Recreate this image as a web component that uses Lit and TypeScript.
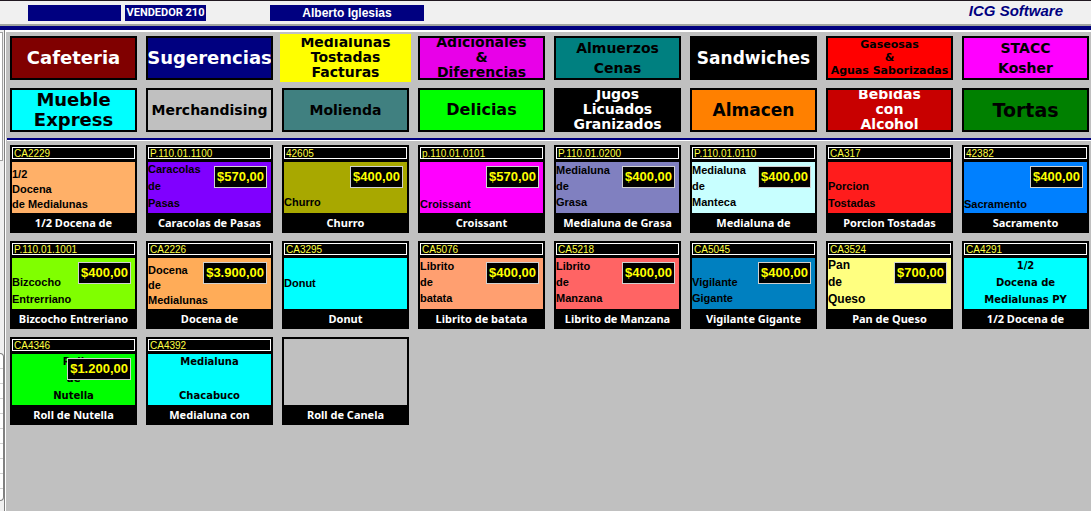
import { LitElement, html, css, nothing } from "lit";
import { customElement, property } from "lit/decorators.js";
import { classMap } from "lit/directives/class-map.js";
import { styleMap } from "lit/directives/style-map.js";

interface Category {
  lines: string[];
  bg: string;
  fg?: string;
  size: number;
  lh: number;
  selected?: boolean;
}

interface Product {
  code?: string;
  lines: string[];
  bg: string;
  name: string;
  price?: string;
  size?: number;
  lh?: number;
  align?: "raised" | "mid";
  wide?: boolean;
}

const CATEGORIES: Category[] = [
  { lines: ["Cafeteria"], bg: "#800000", fg: "#fff", size: 18, lh: 22 },
  { lines: ["Sugerencias"], bg: "#000080", fg: "#fff", size: 18, lh: 22 },
  { lines: ["Medialunas", "Tostadas", "Facturas"], bg: "#ffff00", size: 14, lh: 15, selected: true },
  { lines: ["Adicionales", "&", "Diferencias"], bg: "#e800e8", size: 14, lh: 15 },
  { lines: ["Almuerzos", "Cenas"], bg: "#008080", size: 14, lh: 20 },
  { lines: ["Sandwiches"], bg: "#000", fg: "#fff", size: 17, lh: 20 },
  { lines: ["Gaseosas", "&", "Aguas Saborizadas"], bg: "#ff0000", size: 11, lh: 13 },
  { lines: ["STACC", "Kosher"], bg: "#ff00ff", size: 14, lh: 20 },
  { lines: ["Mueble", "Express"], bg: "#00ffff", size: 18, lh: 20 },
  { lines: ["Merchandising"], bg: "#c0c0c0", size: 14, lh: 20 },
  { lines: ["Molienda"], bg: "#408080", size: 14, lh: 20 },
  { lines: ["Delicias"], bg: "#00ff00", size: 16, lh: 20 },
  { lines: ["Jugos", "Licuados", "Granizados"], bg: "#000", fg: "#fff", size: 14, lh: 15 },
  { lines: ["Almacen"], bg: "#ff8000", size: 17, lh: 20 },
  { lines: ["Bebidas", "con", "Alcohol"], bg: "#c80000", fg: "#fff", size: 14, lh: 15 },
  { lines: ["Tortas"], bg: "#008000", size: 19, lh: 20 },
];

const PRODUCTS: Product[] = [
  { code: "CA2229", lines: ["1/2", "Docena", "de Medialunas"], bg: "#ffb068", name: "1/2 Docena de", lh: 15 },
  { code: "P.110.01.1100", lines: ["Caracolas", "de", "Pasas"], bg: "#8000ff", name: "Caracolas de Pasas", price: "$570,00", lh: 17 },
  { code: "42605", lines: ["Churro"], bg: "#a8a800", name: "Churro", price: "$400,00", align: "raised" },
  { code: "p.110.01.0101", lines: ["Croissant"], bg: "#ff00ff", name: "Croissant", price: "$570,00" },
  { code: "P.110.01.0200", lines: ["Medialuna", "de", "Grasa"], bg: "#8080c0", name: "Medialuna de Grasa", price: "$400,00", align: "raised" },
  { code: "P.110.01.0110", lines: ["Medialuna", "de", "Manteca"], bg: "#c8ffff", name: "Medialuna de", price: "$400,00", align: "raised" },
  { code: "CA317", lines: ["Porcion", "Tostadas"], bg: "#ff1c1c", name: "Porcion Tostadas", lh: 17 },
  { code: "42382", lines: ["Sacramento"], bg: "#0080ff", name: "Sacramento", price: "$400,00" },
  { code: "P.110.01.1001", lines: ["Bizcocho", "Entrerriano"], bg: "#80ff00", name: "Bizcocho Entreriano", price: "$400,00", lh: 17 },
  { code: "CA2226", lines: ["Docena", "de", "Medialunas"], bg: "#ffac58", name: "Docena de", price: "$3.900,00", lh: 15 },
  { code: "CA3295", lines: ["Donut"], bg: "#00ffff", name: "Donut", align: "mid" },
  { code: "CA5076", lines: ["Librito", "de", "batata"], bg: "#ff9f70", name: "Librito de batata", price: "$400,00", align: "raised" },
  { code: "CA5218", lines: ["Librito", "de", "Manzana"], bg: "#ff6464", name: "Librito de Manzana", price: "$400,00", align: "raised" },
  { code: "CA5045", lines: ["Vigilante", "Gigante"], bg: "#0080c0", name: "Vigilante Gigante", price: "$400,00", align: "raised" },
  { code: "CA3524", lines: ["Pan", "de", "Queso"], bg: "#ffff80", name: "Pan de Queso", price: "$700,00", size: 12, lh: 17 },
  { code: "CA4291", lines: ["1/2", "Docena de", "Medialunas PY"], bg: "#00ffff", name: "1/2 Docena de", wide: true, lh: 17 },
  { code: "CA4346", lines: ["Roll", "de", "Nutella"], bg: "#00ff00", name: "Roll de Nutella", price: "$1.200,00", wide: true, lh: 17 },
  { code: "CA4392", lines: ["Medialuna", "\u00a0", "Chacabuco"], bg: "#00ffff", name: "Medialuna con", wide: true, lh: 17 },
  { lines: [], bg: "#c0c0c0", name: "Roll de Canela" },
];

@customElement("category-button")
export class CategoryButton extends LitElement {
  @property({ attribute: false }) item!: Category;

  static styles = css`
    :host {
      display: block;
      height: 44px;
    }
    .cat {
      box-sizing: border-box;
      width: 100%;
      height: 100%;
      padding: 0;
      border: 2px solid #000;
      display: flex;
      flex-direction: column;
      align-items: center;
      justify-content: center;
      overflow: hidden;
      font-family: "DejaVu Sans", sans-serif;
      font-weight: bold;
      white-space: nowrap;
    }
    .triple {
      padding-bottom: 2px;
    }
    .line {
      flex: none;
    }
    .selected {
      border-color: #ffff00;
      outline: 2px solid #ffff00;
    }
  `;

  render() {
    const c = this.item;
    return html`<button
      class=${classMap({ cat: true, triple: c.lines.length > 2, selected: !!c.selected })}
      style=${styleMap({
        background: c.bg,
        color: c.fg ?? "#000",
        fontSize: `${c.size}px`,
        lineHeight: `${c.lh}px`,
      })}
    >
      ${c.lines.map((l) => html`<span class="line">${l}</span>`)}
    </button>`;
  }
}

@customElement("product-button")
export class ProductButton extends LitElement {
  @property({ attribute: false }) item!: Product;

  static styles = css`
    :host {
      display: block;
      height: 88px;
    }
    .tile {
      position: relative;
      box-sizing: border-box;
      width: 100%;
      height: 100%;
      padding: 0;
      border: 2px solid #000;
      background: #000;
      display: flex;
      flex-direction: column;
      align-items: stretch;
      text-align: left;
    }
    .code {
      flex: none;
      box-sizing: border-box;
      height: 12px;
      margin-bottom: 3px;
      padding-left: 1px;
      border: 1px solid #fff;
      color: #ffff40;
      font: 10px/11px "Liberation Sans", Arial, sans-serif;
      overflow: hidden;
    }
    .art {
      flex: 1;
      min-height: 0;
      display: flex;
      flex-direction: column;
      justify-content: flex-end;
      overflow: hidden;
      padding-bottom: 1px;
      color: #000;
      font: bold 11px/16px "Liberation Sans", Arial, sans-serif;
      white-space: nowrap;
    }
    .raised {
      padding-bottom: 3px;
    }
    .mid {
      justify-content: center;
    }
    .wide {
      align-items: center;
      font-family: "DejaVu Sans", sans-serif;
      font-size: 10px;
    }
    .line {
      flex: none;
    }
    .name {
      flex: none;
      height: 18px;
      overflow: hidden;
      text-align: center;
      color: #fff;
      font: bold 11px/20px "Noto Sans", "Open Sans", sans-serif;
      white-space: nowrap;
    }
    .price {
      position: absolute;
      top: 19px;
      right: 4px;
      padding: 0 2px;
      border: 1px solid #d0d0d0;
      background: #000;
      color: #ffff00;
      font: bold 13px/20px "Liberation Sans", Arial, sans-serif;
    }
  `;

  render() {
    const p = this.item;
    const art: Record<string, string> = {
      background: p.bg,
      lineHeight: `${p.lh ?? 16}px`,
    };
    if (p.size) art.fontSize = `${p.size}px`;
    return html`<button class="tile">
      ${p.code ? html`<span class="code">${p.code}</span>` : nothing}
      <span
        class=${classMap({
          art: true,
          raised: p.align === "raised",
          mid: p.align === "mid",
          wide: !!p.wide,
        })}
        style=${styleMap(art)}
      >
        ${p.lines.map((l) => html`<span class="line">${l}</span>`)}
      </span>
      <span class="name">${p.name}</span>
      ${p.price ? html`<span class="price">${p.price}</span>` : nothing}
    </button>`;
  }
}

@customElement("app-root")
export class AppRoot extends LitElement {
  static styles = css`
    :host {
      display: flex;
      flex-direction: column;
      min-height: 100vh;
      background: #c0c0c0;
    }
    .top {
      box-sizing: border-box;
      height: 30px;
      display: flex;
      align-items: flex-start;
      padding: 4px 28px 0 28px;
      border-top: 1px solid #201820;
      border-bottom: 4px solid #000080;
      background: linear-gradient(#f0f0f0 23px, #a0a4a0 23px);
      background-clip: padding-box;
      color: #fff;
      font: bold 12px/16px "Liberation Sans", Arial, sans-serif;
      text-align: center;
      white-space: nowrap;
    }
    .field {
      height: 16px;
      background: #000080;
    }
    .blank {
      width: 93px;
      margin-right: 4px;
    }
    .seller {
      width: 81px;
      margin-right: 64px;
      font-family: Roboto, sans-serif;
      font-size: 11px;
    }
    .user {
      width: 154px;
    }
    .brand {
      margin-left: auto;
      color: #000080;
      font-size: 15px;
      line-height: 12px;
      font-style: italic;
    }
    .body {
      flex: 1;
      display: flex;
    }
    .side {
      flex: none;
      width: 4px;
      display: flex;
      flex-direction: column;
      align-items: flex-start;
      background: #f0f0f0;
      border-right: 1px solid #808080;
      box-shadow: 1px 0 #fff;
    }
    .panel {
      box-sizing: border-box;
      width: 3px;
      height: 129px;
      margin-top: 2px;
      border: 1px solid #a0a0a0;
      border-left: 0;
      background: #fff;
    }
    .list {
      box-sizing: border-box;
      width: 4px;
      margin-top: 192px;
      height: 148px;
      border: 1px solid #808080;
      border-left: 0;
      border-radius: 0 4px 4px 0;
      background: repeating-linear-gradient(#fff 0 14px, #d0d0d0 14px 15px);
    }
    .main {
      flex: 1;
      min-width: 0;
      margin-left: 1px;
      border-top: 2px solid #fff;
    }
    .grid {
      display: grid;
      grid-template-columns: repeat(8, minmax(0, 1fr));
      gap: 8px 9px;
      padding: 0 2px 0 4px;
    }
    .cats {
      padding-top: 4px;
      padding-bottom: 6px;
    }
    .rule {
      height: 2px;
      margin-left: 1px;
      border-bottom: 1px solid #fff;
      background: #000080;
    }
    .prods {
      padding-top: 4px;
    }
  `;

  render() {
    return html`
      <header class="top">
        <span class="field blank"></span>
        <span class="field seller">VENDEDOR 210</span>
        <span class="field user">Alberto Iglesias</span>
        <span class="brand">ICG Software</span>
      </header>
      <div class="body">
        <aside class="side">
          <div class="panel"></div>
          <div class="list"></div>
        </aside>
        <main class="main">
          <nav class="grid cats">
            ${CATEGORIES.map((c) => html`<category-button .item=${c}></category-button>`)}
          </nav>
          <div class="rule"></div>
          <section class="grid prods">
            ${PRODUCTS.map((p) => html`<product-button .item=${p}></product-button>`)}
          </section>
        </main>
      </div>
    `;
  }
}
